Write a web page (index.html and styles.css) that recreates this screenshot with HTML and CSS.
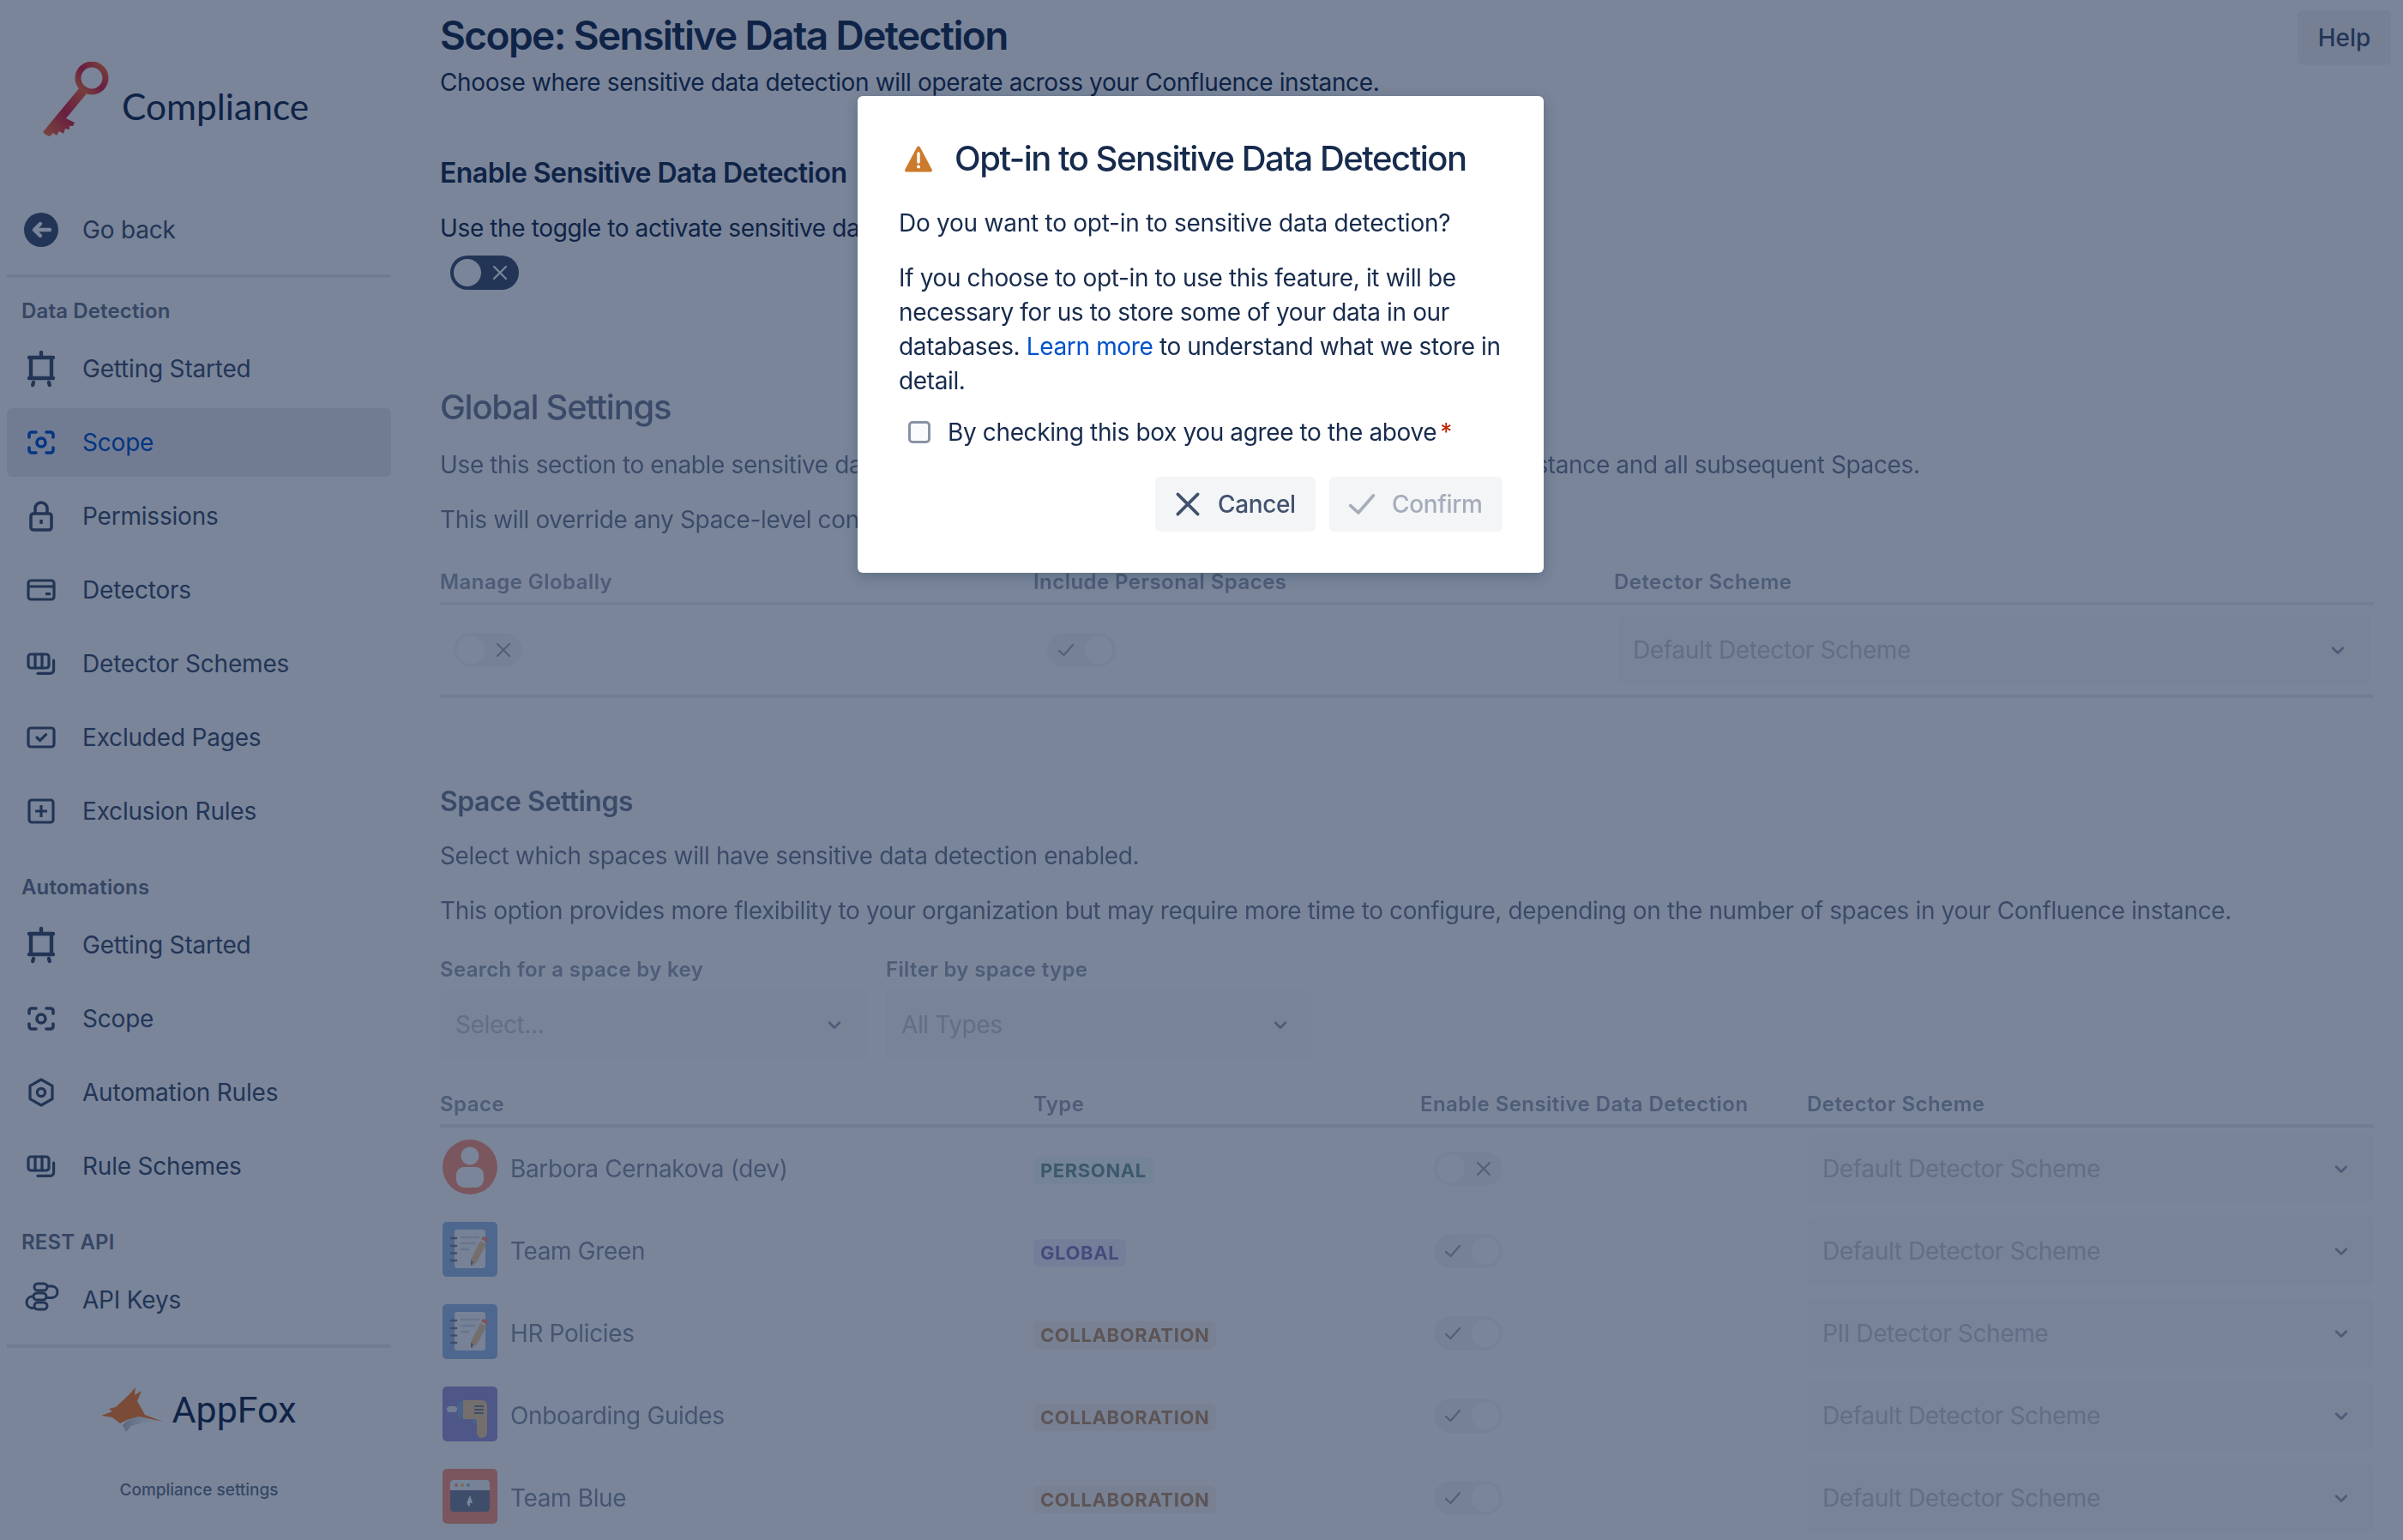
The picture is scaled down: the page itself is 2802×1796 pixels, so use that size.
FILE: index.html
```html
<!DOCTYPE html>
<html lang="en">
<head>
  <meta charset="UTF-8">
  <title>Scope: Sensitive Data Detection</title>
  <link rel="stylesheet" href="styles.css">
</head>
<body>
  <svg class="defs" width="0" height="0">
    <defs>
      <symbol id="i-easel" viewBox="0 0 24 24"><path d="M6 5.500h12v12H6z M12 2.500v3 M5 5.500h14 M5 17.500h14 M7.500 20l-.4 1.500 M16.500 20l.4 1.500" fill="none" stroke="currentColor" stroke-width="2.200" stroke-linecap="round"/></symbol>
      <symbol id="i-scope" viewBox="0 0 24 24"><path d="M9 6H6.500a1.500 1.500 0 0 0-1.500 1.500V9 M15 6h2.500A1.500 1.500 0 0 1 19 7.500V9 M9 18H6.500A1.500 1.500 0 0 1 5 16.500V15 M15 18h2.500a1.500 1.500 0 0 0 1.500-1.500V15" fill="none" stroke="currentColor" stroke-width="1.800" stroke-linecap="round"/><circle cx="12" cy="12" r="2.500" fill="none" stroke="currentColor" stroke-width="1.800"/></symbol>
      <symbol id="i-lock" viewBox="0 0 24 24"><rect x="6" y="10.500" width="12" height="9.500" rx="1.500" fill="none" stroke="currentColor" stroke-width="1.800"/><path d="M8.500 10.500V7.500a3.500 3.500 0 0 1 7 0v3" fill="none" stroke="currentColor" stroke-width="1.800"/><path d="M12 14v2.500" stroke="currentColor" stroke-width="1.800"/></symbol>
      <symbol id="i-card" viewBox="0 0 24 24"><rect x="4.500" y="6.500" width="15" height="11" rx="1.500" fill="none" stroke="currentColor" stroke-width="1.600"/><path d="M4.500 10h15 M14.500 14.300h3" fill="none" stroke="currentColor" stroke-width="1.600"/></symbol>
      <symbol id="i-board" viewBox="0 0 24 24"><rect x="4.500" y="6.500" width="12" height="8" rx="1.500" fill="none" stroke="currentColor" stroke-width="1.600"/><path d="M8.500 6.500v8 M12.500 6.500v8 M19.300 10v5.700a2 2 0 0 1-2 2H10" fill="none" stroke="currentColor" stroke-width="1.600" stroke-linecap="round"/></symbol>
      <symbol id="i-checkbox" viewBox="0 0 24 24"><rect x="4.500" y="6.500" width="15" height="11" rx="1.500" fill="none" stroke="currentColor" stroke-width="1.600"/><path d="M9.500 12l1.800 1.800 3.500-3.500" fill="none" stroke="currentColor" stroke-width="1.600" stroke-linecap="round" stroke-linejoin="round"/></symbol>
      <symbol id="i-plus" viewBox="0 0 24 24"><rect x="5" y="5.500" width="14" height="13" rx="1.500" fill="none" stroke="currentColor" stroke-width="1.600"/><path d="M12 8.500v7 M8.500 12h7" fill="none" stroke="currentColor" stroke-width="1.600"/></symbol>
      <symbol id="i-hex" viewBox="0 0 24 24"><path d="M12 4.500l6.500 3.700v7.600L12 19.500l-6.500-3.700V8.200z" fill="none" stroke="currentColor" stroke-width="1.600" stroke-linejoin="round"/><circle cx="12" cy="12" r="2.300" fill="none" stroke="currentColor" stroke-width="1.600"/></symbol>
      <symbol id="i-api" viewBox="0 0 48 48"><rect x="16" y="5" width="15" height="8" rx="4" fill="none" stroke="currentColor" stroke-width="3"/><rect x="15" y="16" width="15" height="8" rx="4" fill="none" stroke="currentColor" stroke-width="3"/><rect x="16" y="27" width="15" height="8" rx="4" fill="none" stroke="currentColor" stroke-width="3"/><path d="M31 8h6a6.800 6.800 0 0 1 0 13.500h-7 M15 20h-2a6.800 6.800 0 0 0 0 13.500h3" fill="none" stroke="currentColor" stroke-width="3"/></symbol>
      <symbol id="i-x" viewBox="0 0 24 24"><path d="M5 5l14 14 M19 5L5 19" fill="none" stroke="currentColor" stroke-width="2.200" stroke-linecap="round"/></symbol>
      <symbol id="i-check" viewBox="0 0 24 24"><path d="M4 13l5.500 5L20 6" fill="none" stroke="currentColor" stroke-width="2.200" stroke-linecap="round" stroke-linejoin="round"/></symbol>
      <symbol id="i-chevron" viewBox="0 0 24 24"><path d="M7 10l5 5 5-5" fill="none" stroke="currentColor" stroke-width="2.400" stroke-linecap="round" stroke-linejoin="round"/></symbol>
      <symbol id="i-notes" viewBox="0 0 64 64"><rect width="64" height="64" rx="5" fill="#5f93d6"/><rect x="14" y="9" width="36" height="45" rx="3" fill="#f4f5f7"/><path d="M10 19h6 M10 28h6 M10 36.500h6 M10 45h6" stroke="#253858" stroke-width="2.600" stroke-linecap="round"/><path d="M21 18h22 M21 25h18 M21 32h10" stroke="#c1c7d0" stroke-width="2.600"/><path d="M44 22l7 4-11 21-6 5-1-8z" fill="#e8b060"/><path d="M45 20l2-3 7 3-2 4z" fill="#ff5630"/><path d="M33 45l3 1.500-3 5z" fill="#253858"/></symbol>
      <symbol id="i-drill" viewBox="0 0 64 64"><rect width="64" height="64" rx="5" fill="#6554c0"/><rect x="5" y="23" width="12" height="7" rx="3.500" fill="#dfe1e6"/><rect x="17" y="17" width="7" height="19" rx="1.500" fill="#4c7fc4"/><path d="M24 16h22a6 6 0 0 1 6 6v32a6 6 0 0 1-12 0V38H24z" fill="#e8b060"/><path d="M37 23h11 M37 27h11 M37 31h11" stroke="#253858" stroke-width="2"/><path d="M34 38h6v6h-3z" fill="#4c7fc4"/></symbol>
      <symbol id="i-browser" viewBox="0 0 64 64"><rect width="64" height="64" rx="5" fill="#ff5630"/><rect x="9" y="13" width="46" height="37" rx="4" fill="#253858"/><path d="M9 25v-8a4 4 0 0 1 4-4h38a4 4 0 0 1 4 4v8z" fill="#f4f5f7"/><circle cx="16" cy="19" r="2" fill="#ff5630"/><circle cx="23" cy="19" r="2" fill="#ffab00"/><circle cx="30" cy="19" r="2" fill="#36b37e"/><path d="M32 31l3 9h-3v4l-3-2 0-3-1 1z" fill="#fff"/></symbol>
      <symbol id="i-person" viewBox="0 0 64 64"><circle cx="32" cy="32" r="32" fill="#ff5630"/><ellipse cx="32" cy="19" rx="10.500" ry="10.500" fill="#fff"/><rect x="16" y="32" width="32" height="24" rx="9" fill="#fff"/></symbol>
      <linearGradient id="keyfill" x1="0" y1="1" x2="1" y2="0">
        <stop offset="0" stop-color="#ff7a38"/>
        <stop offset="0.5" stop-color="#d91f3c"/>
        <stop offset="1" stop-color="#ff7038"/>
      </linearGradient>
      <linearGradient id="foxgrey" x1="0" y1="0" x2="1" y2="0">
        <stop offset="0" stop-color="#b6bdc9"/>
        <stop offset="1" stop-color="#ffffff" stop-opacity="0.2"/>
      </linearGradient>
    </defs>
  </svg>

  <div class="page">
    <aside class="sidebar">
      <div class="brand">
        <svg class="key-logo" viewBox="0 0 80 92">
          <circle cx="57" cy="19" r="16" fill="none" stroke="url(#keyfill)" stroke-width="7"/>
          <path d="M43 30l9 6-25 30 10 5-2 4-4 0 0 4-5-1-2 6-5-3-3 5-4-3-4 4-5-2-3-3z" fill="url(#keyfill)"/>
        </svg>
        <span class="brand-name">Compliance</span>
      </div>

      <a class="nav-item">
        <svg class="nav-icon" viewBox="0 0 24 24"><circle cx="12" cy="12" r="10" fill="currentColor"/><path d="M17 12H8 M11.500 8.500L8 12l3.500 3.500" fill="none" stroke="#fff" stroke-width="2.200" stroke-linecap="round" stroke-linejoin="round"/></svg>
        Go back
      </a>
      <div class="side-rule"></div>

      <h4 class="nav-heading first">Data Detection</h4>
      <nav class="nav-group">
        <a class="nav-item"><svg class="nav-icon"><use href="#i-easel"/></svg>Getting Started</a>
        <a class="nav-item active"><svg class="nav-icon"><use href="#i-scope"/></svg>Scope</a>
        <a class="nav-item"><svg class="nav-icon"><use href="#i-lock"/></svg>Permissions</a>
        <a class="nav-item"><svg class="nav-icon"><use href="#i-card"/></svg>Detectors</a>
        <a class="nav-item"><svg class="nav-icon"><use href="#i-board"/></svg>Detector Schemes</a>
        <a class="nav-item"><svg class="nav-icon"><use href="#i-checkbox"/></svg>Excluded Pages</a>
        <a class="nav-item"><svg class="nav-icon"><use href="#i-plus"/></svg>Exclusion Rules</a>
      </nav>

      <h4 class="nav-heading">Automations</h4>
      <nav class="nav-group">
        <a class="nav-item"><svg class="nav-icon"><use href="#i-easel"/></svg>Getting Started</a>
        <a class="nav-item"><svg class="nav-icon"><use href="#i-scope"/></svg>Scope</a>
        <a class="nav-item"><svg class="nav-icon"><use href="#i-hex"/></svg>Automation Rules</a>
        <a class="nav-item"><svg class="nav-icon"><use href="#i-board"/></svg>Rule Schemes</a>
      </nav>

      <h4 class="nav-heading">REST API</h4>
      <nav class="nav-group">
        <a class="nav-item"><svg class="nav-icon"><use href="#i-api"/></svg>API Keys</a>
      </nav>
      <div class="side-rule"></div>

      <div class="vendor">
        <svg class="fox-logo" viewBox="0 0 72 52">
          <path d="M0 33l13-5-4-3 8-2 15-14 8-9-1 9 8-5-5 12 9 16 21 8-28-6-14 4-8 4-9-7z" fill="#ff8029"/>
          <path d="M30 39l15-5 27 7-23 0-14 4-6 7-4-8z" fill="url(#foxgrey)"/>
        </svg>
        <span class="vendor-name">AppFox</span>
      </div>
      <p class="vendor-caption">Compliance settings</p>
    </aside>

    <main class="content">
      <header class="title-row">
        <h1>Scope: Sensitive Data Detection</h1>
        <button class="help-btn">Help</button>
      </header>
      <p class="lead">Choose where sensitive data detection will operate across your Confluence instance.</p>

      <h3 class="enable-title">Enable Sensitive Data Detection</h3>
      <p class="enable-text">Use the toggle to activate sensitive data detection for your Confluence instance.</p>
      <div class="toggle on-dark">
        <span class="knob"></span>
        <svg class="toggle-icon"><use href="#i-x"/></svg>
      </div>

      <div class="disabled-area">
        <h2 class="global-title">Global Settings</h2>
        <p class="global-text">Use this section to enable sensitive data detection at a global level across your entire Confluence instance and all subsequent Spaces.</p>
        <p class="para-gap">This will override any Space-level configuration that has been set below.</p>

        <div class="table global-grid head">
          <span>Manage Globally</span>
          <span>Include Personal Spaces</span>
          <span>Detector Scheme</span>
        </div>
        <div class="table global-grid global-row">
          <div class="toggle off"><span class="knob"></span><svg class="toggle-icon"><use href="#i-x"/></svg></div>
          <div class="toggle on"><svg class="toggle-icon"><use href="#i-check"/></svg><span class="knob"></span></div>
          <div class="select wide">Default Detector Scheme<svg class="chevron"><use href="#i-chevron"/></svg></div>
        </div>

        <h3 class="space-title">Space Settings</h3>
        <p class="space-text">Select which spaces will have sensitive data detection enabled.</p>
        <p class="para-gap">This option provides more flexibility to your organization but may require more time to configure, depending on the number of spaces in your Confluence instance.</p>

        <div class="filters">
          <label class="filter">
            <span class="filter-label">Search for a space by key</span>
            <div class="select">Select...<svg class="chevron"><use href="#i-chevron"/></svg></div>
          </label>
          <label class="filter">
            <span class="filter-label">Filter by space type</span>
            <div class="select">All Types<svg class="chevron"><use href="#i-chevron"/></svg></div>
          </label>
        </div>

        <div class="table space-grid head">
          <span>Space</span>
          <span>Type</span>
          <span>Enable Sensitive Data Detection</span>
          <span>Detector Scheme</span>
        </div>

        <div class="table space-grid space-row">
          <div class="space-name"><svg class="space-icon"><use href="#i-person"/></svg>Barbora Cernakova (dev)</div>
          <div><span class="lozenge green">Personal</span></div>
          <div class="toggle off"><span class="knob"></span><svg class="toggle-icon"><use href="#i-x"/></svg></div>
          <div class="select">Default Detector Scheme<svg class="chevron"><use href="#i-chevron"/></svg></div>
        </div>
        <div class="table space-grid space-row">
          <div class="space-name"><svg class="space-icon"><use href="#i-notes"/></svg>Team Green</div>
          <div><span class="lozenge purple">Global</span></div>
          <div class="toggle on"><svg class="toggle-icon"><use href="#i-check"/></svg><span class="knob"></span></div>
          <div class="select">Default Detector Scheme<svg class="chevron"><use href="#i-chevron"/></svg></div>
        </div>
        <div class="table space-grid space-row">
          <div class="space-name"><svg class="space-icon"><use href="#i-notes"/></svg>HR Policies</div>
          <div><span class="lozenge brown">Collaboration</span></div>
          <div class="toggle on"><svg class="toggle-icon"><use href="#i-check"/></svg><span class="knob"></span></div>
          <div class="select">PII Detector Scheme<svg class="chevron"><use href="#i-chevron"/></svg></div>
        </div>
        <div class="table space-grid space-row">
          <div class="space-name"><svg class="space-icon"><use href="#i-drill"/></svg>Onboarding Guides</div>
          <div><span class="lozenge brown">Collaboration</span></div>
          <div class="toggle on"><svg class="toggle-icon"><use href="#i-check"/></svg><span class="knob"></span></div>
          <div class="select">Default Detector Scheme<svg class="chevron"><use href="#i-chevron"/></svg></div>
        </div>
        <div class="table space-grid space-row">
          <div class="space-name"><svg class="space-icon"><use href="#i-browser"/></svg>Team Blue</div>
          <div><span class="lozenge brown">Collaboration</span></div>
          <div class="toggle on"><svg class="toggle-icon"><use href="#i-check"/></svg><span class="knob"></span></div>
          <div class="select">Default Detector Scheme<svg class="chevron"><use href="#i-chevron"/></svg></div>
        </div>
      </div>
    </main>
  </div>

  <div class="blanket"></div>

  <section class="modal">
    <div class="modal-title">
      <svg class="warn-icon" viewBox="0 0 34 32">
        <path d="M17 1.500c.8 0 1.500.4 1.900 1.200l13.800 26c.7 1.300-.2 2.800-1.700 2.800H3c-1.500 0-2.400-1.500-1.700-2.800l13.800-26c.4-.8 1.100-1.200 1.900-1.200z" fill="#cc7a2c"/>
        <path d="M17 10v10" stroke="#fff" stroke-width="3.400" stroke-linecap="round"/>
        <circle cx="17" cy="25.500" r="2" fill="#fff"/>
      </svg>
      <h2>Opt-in to Sensitive Data Detection</h2>
    </div>
    <p class="modal-question">Do you want to opt-in to sensitive data detection?</p>
    <p class="modal-body">If you choose to opt-in to use this feature, it will be necessary for us to store some of your data in our databases. <a class="link">Learn more</a> to understand what we store in detail.</p>
    <label class="agree">
      <span class="checkbox"></span>
      <span>By checking this box you agree to the above</span><span class="required">*</span>
    </label>
    <div class="modal-actions">
      <button class="modal-btn cancel"><svg class="btn-icon"><use href="#i-x"/></svg>Cancel</button>
      <button class="modal-btn confirm"><svg class="btn-icon"><use href="#i-check"/></svg>Confirm</button>
    </div>
  </section>
</body>
</html>
```

FILE: styles.css
```css
* {
  box-sizing: border-box;
}

html, body {
  margin: 0;
  height: 1796px;
  overflow: hidden;
}

body {
  font-family: Inter, "Noto Sans", sans-serif;
  font-size: 28px;
  line-height: 40px;
  letter-spacing: -0.37px;
  color: #172b4d;
  background: #fff;
}

h1, h2, h3, h4, p {
  margin: 0;
}

.defs {
  position: absolute;
}

.page {
  display: flex;
  height: 1796px;
}

/* sidebar */
.sidebar {
  width: 513px;
  flex-shrink: 0;
  padding: 0 57px 0 8px;
  letter-spacing: -0.2px;
}

.brand {
  display: flex;
  align-items: center;
  height: 228px;
  padding: 0 0 4px 42px;
}

.key-logo {
  width: 80px;
  height: 92px;
  margin-top: 12px;
}

.brand-name {
  font-family: Lato, sans-serif;
  font-size: 42.5px;
  letter-spacing: 0;
  margin: 24px 0 0 12px;
  color: #172b4d;
}

.nav-group {
  display: flex;
  flex-direction: column;
  gap: 6px;
}

.nav-item {
  display: flex;
  align-items: center;
  height: 80px;
  color: #42526e;
  border-radius: 6px;
}

.nav-item.active {
  background: #ebecf0;
  color: #0052cc;
}

.nav-icon {
  width: 48px;
  height: 48px;
  margin: 0 24px 0 16px;
  flex-shrink: 0;
}

.side-rule {
  height: 4px;
  margin-top: 12px;
  background: #ebecf0;
}

.nav-heading {
  font-size: 24px;
  line-height: 32px;
  font-weight: 600;
  letter-spacing: 0.15px;
  color: #6b778c;
  margin: 33px 0 11px 17px;
}

.nav-heading.first {
  margin-top: 23px;
  margin-bottom: 11px;
}

.vendor {
  display: flex;
  justify-content: center;
  align-items: center;
  gap: 10px;
  margin-top: 44px;
}

.fox-logo {
  width: 72px;
  height: 52px;
}

.vendor-name {
  font-family: Roboto, sans-serif;
  font-size: 43px;
  line-height: 56px;
  letter-spacing: 0;
  color: #172b4d;
}

.vendor-caption {
  font-size: 19px;
  font-weight: 500;
  text-align: center;
  line-height: 28px;
  letter-spacing: 0;
  color: #6b778c;
  margin-top: 52px;
}

/* main column */
.content {
  flex: 1;
  padding: 13px 34px 0 0;
  min-width: 0;
}

.title-row {
  display: flex;
  justify-content: space-between;
  align-items: flex-start;
  height: 56px;
}

h1 {
  font-size: 46px;
  line-height: 56px;
  font-weight: 600;
  letter-spacing: -1.6px;
}

.help-btn {
  font: 500 28px/64px Inter, sans-serif;
  width: 109px;
  height: 64px;
  margin: -1px -20px 0 0;
  padding: 0;
  color: #42526e;
  background: #f4f5f7;
  border: 0;
  border-radius: 6px;
}

.lead {
  margin-top: 7px;
}

.enable-title {
  font-size: 32px;
  line-height: 40px;
  font-weight: 600;
  letter-spacing: -0.55px;
  margin-top: 66px;
}

.enable-text {
  margin-top: 24px;
}

.toggle {
  width: 80px;
  height: 40px;
  border-radius: 20px;
  display: flex;
  align-items: center;
  justify-content: space-between;
  padding: 0 4px;
  margin-left: 16px;
  background: #f1f2f4;
  color: #6b778c;
}

.toggle .knob {
  width: 32px;
  height: 32px;
  border-radius: 50%;
  background: #fff;
}

.toggle-icon {
  width: 24px;
  height: 24px;
  margin: 0 6px;
}

.toggle.on-dark {
  margin-left: 12px;
  margin-top: 12px;
  background: #42526e;
  color: #fff;
}

/* greyed out settings */
.disabled-area {
  opacity: 0.6;
}

.global-title {
  font-size: 40px;
  line-height: 48px;
  font-weight: 500;
  letter-spacing: -1.3px;
  margin-top: 113px;
}

.global-text {
  margin-top: 23px;
}

.para-gap {
  margin-top: 24px;
}

.table {
  display: grid;
  align-items: center;
}

.global-grid {
  grid-template-columns: 692px 677px 1fr;
}

.space-grid {
  grid-template-columns: 692px 451px 451px 1fr;
}

.head {
  font-size: 24px;
  line-height: 32px;
  font-weight: 600;
  letter-spacing: 0.45px;
  color: #5e6c84;
  border-bottom: 4px solid #dfe1e6;
  padding-bottom: 7px;
  margin-top: 37px;
}

.global-row {
  height: 108px;
  border-bottom: 4px solid #dfe1e6;
}

.select {
  position: relative;
  display: flex;
  align-items: center;
  height: 80px;
  padding-left: 18px;
  color: #a5adba;
  background: #f7f8f9;
  border-radius: 6px;
}

.select.wide {
  margin: 0 4px;
}

.chevron {
  position: absolute;
  right: 24px;
  top: 26px;
  width: 28px;
  height: 28px;
  color: #5e6c84;
}

.space-title {
  font-size: 32px;
  line-height: 40px;
  font-weight: 600;
  letter-spacing: -0.5px;
  margin-top: 101px;
}

.space-text {
  margin-top: 23px;
}

.filters {
  display: flex;
  gap: 22px;
  margin-top: 33px;
}

.filter {
  width: 498px;
}

.filter-label {
  display: block;
  font-size: 24px;
  line-height: 32px;
  font-weight: 600;
  letter-spacing: 0.35px;
  color: #5e6c84;
  margin-bottom: 8px;
}

.filters + .head {
  margin-top: 37px;
}

.space-row {
  height: 96px;
}

.space-name {
  display: flex;
  align-items: center;
  color: #42526e;
}

.space-icon {
  width: 64px;
  height: 64px;
  margin: 0 15px 4px 3px;
  flex-shrink: 0;
}

.lozenge {
  display: inline-block;
  height: 32px;
  font-size: 22px;
  line-height: 32px;
  font-weight: 700;
  letter-spacing: 0.6px;
  text-transform: uppercase;
  padding: 0 8px;
  border-radius: 6px;
}

.lozenge.green {
  background: #edf9f3;
  color: #1e5f5c;
}

.lozenge.purple {
  background: #eae6ff;
  color: #403294;
}

.lozenge.brown {
  background: #f4f1ea;
  color: #974f0c;
}

/* modal */
.blanket {
  position: absolute;
  inset: 0;
  background: rgba(9, 30, 66, 0.54);
}

.modal {
  position: absolute;
  left: 1000px;
  top: 112px;
  width: 800px;
  height: 556px;
  padding: 48px;
  background: #fff;
  border-radius: 6px;
  box-shadow: 0 4px 16px rgba(9, 30, 66, 0.25);
}

.modal-title {
  display: flex;
  align-items: center;
  height: 48px;
  margin-top: 1px;
}

.modal-title h2 {
  font-size: 40px;
  line-height: 48px;
  font-weight: 500;
  letter-spacing: -1.5px;
}

.warn-icon {
  width: 34px;
  height: 32px;
  margin: 0 25px 0 6px;
}

.modal-question {
  margin-top: 31px;
  letter-spacing: -0.25px;
}

.modal-body {
  margin-top: 24px;
}

.link {
  color: #0052cc;
}

.agree {
  display: flex;
  align-items: center;
  margin-top: 20px;
}

.checkbox {
  width: 26px;
  height: 26px;
  margin: 0 20px 0 11px;
  background: #fafbfc;
  border: 3px solid #8993a4;
  border-radius: 5px;
}

.required {
  color: #bf2600;
  margin-left: 4px;
}

.modal-actions {
  display: flex;
  justify-content: flex-end;
  gap: 16px;
  margin-top: 32px;
}

.modal-btn {
  display: flex;
  align-items: center;
  gap: 15px;
  height: 64px;
  padding: 0 0 0 18px;
  font: 500 28px/64px Inter, sans-serif;
  letter-spacing: -0.37px;
  background: #f4f5f7;
  border: 0;
  border-radius: 6px;
}

.btn-icon {
  width: 40px;
  height: 40px;
}

.cancel {
  width: 187px;
  color: #42526e;
}

.confirm {
  width: 202px;
  color: #a5adba;
}
```
